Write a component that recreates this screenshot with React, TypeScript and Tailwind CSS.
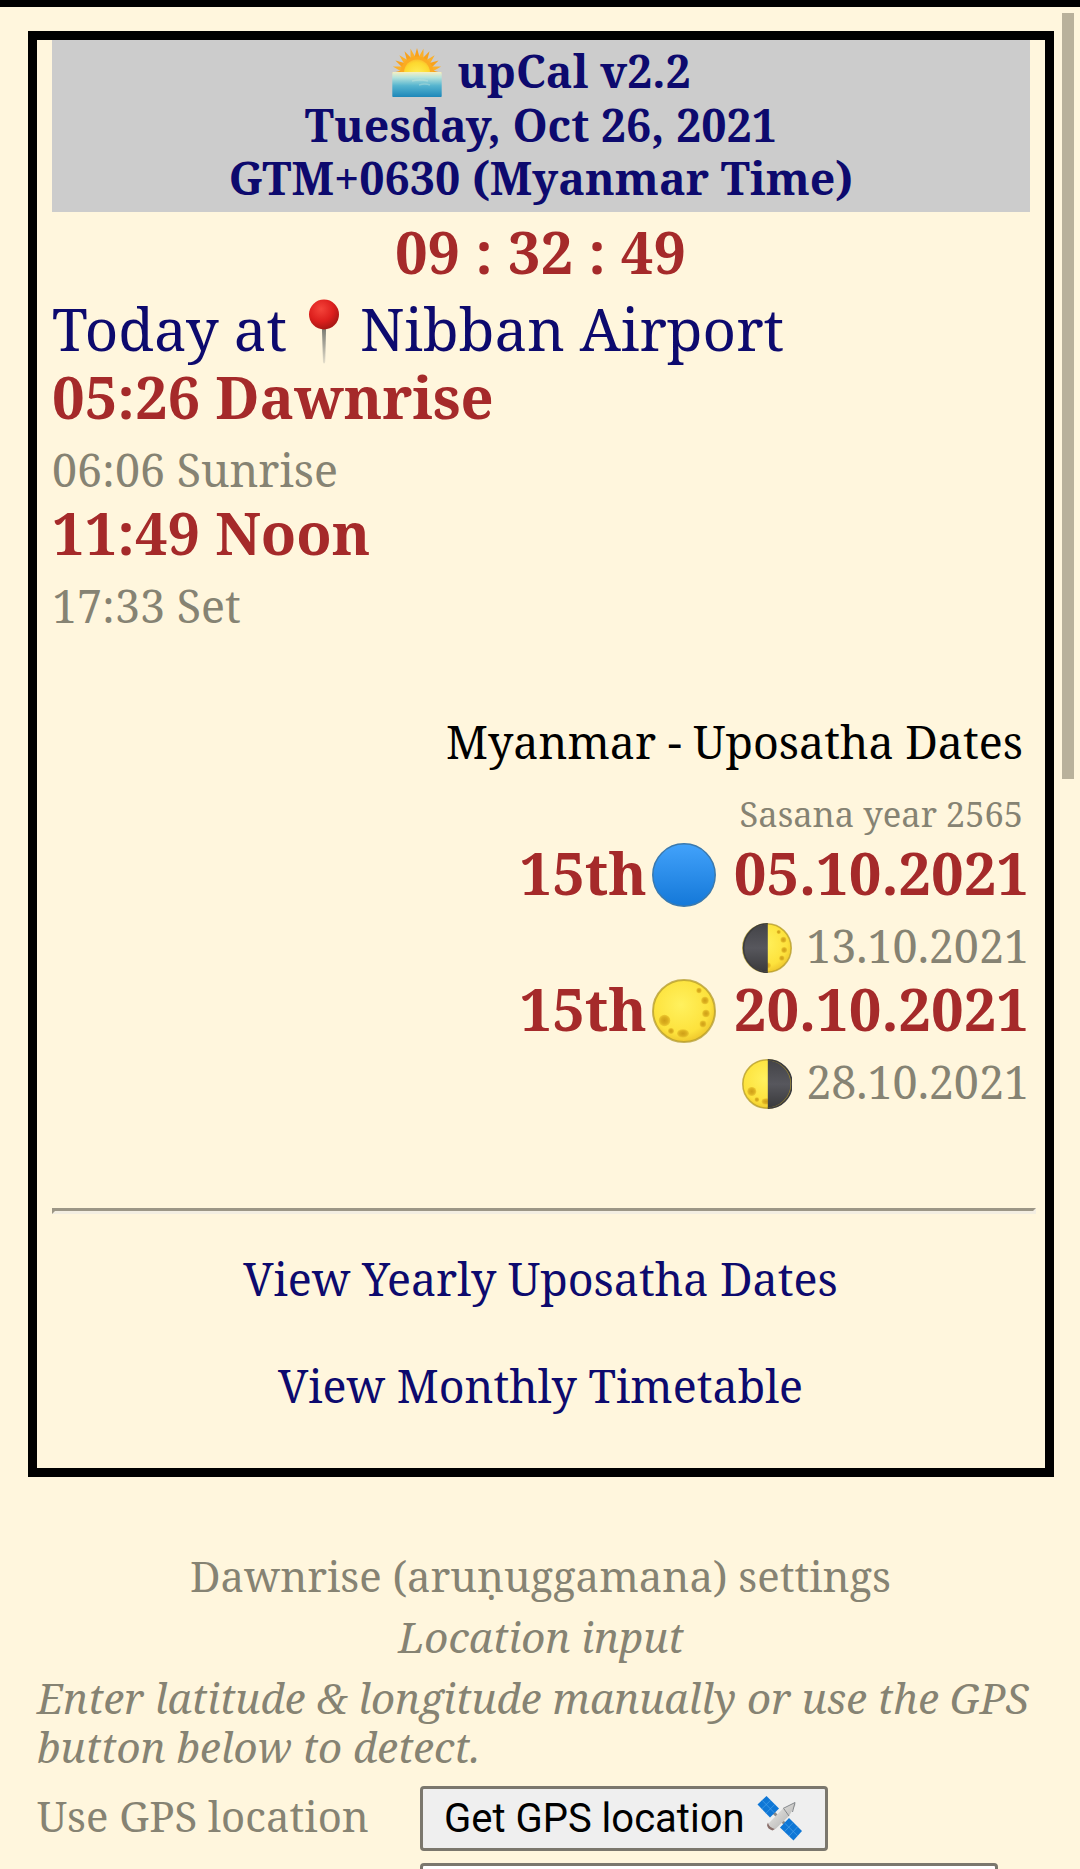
import type { ReactNode } from 'react';

function Sunrise({ className }: { className: string }) {
  const rays = Array.from({ length: 13 }, (_, i) => i * 15 - 90);
  return (
    <svg viewBox="0 0 50 50" className={className}>
      <defs>
        <linearGradient id="sea" x1="0" y1="0" x2="0" y2="1">
          <stop offset="0" stopColor="#f5f0c4" />
          <stop offset="0.22" stopColor="#b5e3dc" />
          <stop offset="0.55" stopColor="#55b4cf" />
          <stop offset="1" stopColor="#1d87b9" />
        </linearGradient>
        <radialGradient id="sun" cx="0.5" cy="0.6" r="0.6">
          <stop offset="0" stopColor="#fff05a" />
          <stop offset="0.8" stopColor="#fdd82f" />
          <stop offset="1" stopColor="#fbc02d" />
        </radialGradient>
      </defs>
      {rays.map((a) => (
        <path key={a} d="M22 12 L25 1 L28 12 Z" fill={a % 30 === 0 ? '#f9a21b' : '#fbb02a'} transform={`rotate(${a} 25 26)`} />
      ))}
      <circle cx="25" cy="26" r="16.5" fill="#fbab22" />
      <circle cx="25" cy="25.5" r="13" fill="url(#sun)" />
      <rect x="0.3" y="25" width="49.4" height="25" rx="0.8" fill="url(#sea)" />
      <path d="M20 34 q8 -2 16 0 M27 38 q6 -2 11 0" stroke="#d8efdf" strokeWidth="1.4" fill="none" opacity="0.35" />
    </svg>
  );
}

function Pin({ className }: { className: string }) {
  return (
    <svg viewBox="0 0 30 66" className={className}>
      <defs>
        <radialGradient id="pinHead" cx="0.4" cy="0.32" r="0.68">
          <stop offset="0" stopColor="#f4443a" />
          <stop offset="0.6" stopColor="#dd1f1d" />
          <stop offset="1" stopColor="#a81714" />
        </radialGradient>
        <linearGradient id="needle" x1="0" y1="0" x2="0" y2="1">
          <stop offset="0" stopColor="#77786f" />
          <stop offset="0.5" stopColor="#a9a79b" />
          <stop offset="1" stopColor="#e5dfcc" />
        </linearGradient>
      </defs>
      <path d="M12.9 28 h4.2 l-0.9 35 q-1.2 3 -2.2 0 Z" fill="url(#needle)" />
      <circle cx="15" cy="15.5" r="15" fill="url(#pinHead)" />
    </svg>
  );
}

function BlueCircle({ className }: { className: string }) {
  return (
    <svg viewBox="0 0 64 64" className={className}>
      <defs>
        <linearGradient id="blue" x1="0" y1="0" x2="0" y2="1">
          <stop offset="0" stopColor="#42a2fb" />
          <stop offset="1" stopColor="#1478d8" />
        </linearGradient>
      </defs>
      <circle cx="32" cy="32" r="31.2" fill="url(#blue)" stroke="#3a79ae" strokeWidth="1.5" />
    </svg>
  );
}

function Moon({ className, dark }: { className: string; dark?: 'left' | 'right' }) {
  const id = dark ?? 'full';
  return (
    <svg viewBox="0 0 64 64" className={className}>
      <defs>
        <radialGradient id={`moon-${id}`} cx="0.45" cy="0.4" r="0.62">
          <stop offset="0" stopColor="#fff15e" />
          <stop offset="0.75" stopColor="#fde23c" />
          <stop offset="1" stopColor="#eec52c" />
        </radialGradient>
        <radialGradient id={`crater-${id}`}>
          <stop offset="0" stopColor="#cf9f18" />
          <stop offset="0.6" stopColor="#dcb020" />
          <stop offset="1" stopColor="#efcb30" />
        </radialGradient>
        <linearGradient id={`shade-${id}`} x1="0" y1="0" x2="0" y2="1">
          <stop offset="0" stopColor="#434347" />
          <stop offset="0.5" stopColor="#57575d" />
          <stop offset="1" stopColor="#39393b" />
        </linearGradient>
      </defs>
      <circle cx="32" cy="32" r="31" fill={`url(#moon-${id})`} />
      <g fill={`url(#crater-${id})`}>
        <circle cx="12.5" cy="41.5" r="5.8" />
        <ellipse cx="31" cy="54.5" rx="6" ry="4.2" />
        <circle cx="19" cy="52" r="3" />
        <circle cx="47" cy="11.5" r="2.7" />
        <circle cx="53" cy="21.5" r="3.8" />
        <circle cx="54" cy="34.5" r="3.8" />
        <circle cx="51" cy="45" r="3.4" />
      </g>
      {dark === 'left' && <path d="M33 1 A31 31 0 0 0 33 63 Z" fill={`url(#shade-${id})`} />}
      {dark === 'right' && <path d="M33 1 A31 31 0 0 1 33 63 Z" fill={`url(#shade-${id})`} />}
      <circle cx="32" cy="32" r="31" fill="none" stroke="#b39a2a" strokeWidth="2" opacity="0.75" />
      {dark === 'left' && <path d="M33 1 A31 31 0 0 0 33 63" fill="none" stroke="#3c3c3f" strokeWidth="2" />}
      {dark === 'right' && <path d="M33 1 A31 31 0 0 1 33 63" fill="none" stroke="#3c3c3f" strokeWidth="2" />}
    </svg>
  );
}

function Satellite({ className }: { className: string }) {
  return (
    <svg viewBox="0 0 45 45" className={className}>
      <defs>
        <linearGradient id="dish" x1="0" y1="0" x2="1" y2="1">
          <stop offset="0" stopColor="#f2f0ec" />
          <stop offset="1" stopColor="#a9a9a9" />
        </linearGradient>
      </defs>
      <path d="M12 12 L33 33" stroke="#8a8a8a" strokeWidth="3" />
      <path d="M9.5 0 L22 12.5 L13 21.5 L0.5 8.5 Z" fill="#0f77d6" />
      <path d="M32 22 L45 35 L36.5 44.5 L23 31.5 Z" fill="#0f77d6" />
      <path d="M5 4.2 L17.5 17 M27.5 27 L40.7 39.8 M13.7 4.2 L4.8 12.8 M17.8 8.4 L9 17.2 M36.3 26.4 L27.4 35.8 M40.7 30.7 L32 40.1" stroke="#55a9ec" strokeWidth="0.6" />
      <path d="M12 27 L26 12.5 L38 6.5 L38.5 9 L32 20 L18.5 33 Q12 33 12 27 Z" fill="url(#dish)" />
      <path d="M26 12.5 L38 6.5 L35.5 16 M27 13 L32 20" stroke="#85888c" strokeWidth="1" fill="none" />
      <path d="M11 26.5 Q12 31.5 18 33 L15.5 34.5 Q10.5 33 10 29 Z" fill="#8a6f6b" />
    </svg>
  );
}

function Strong({ children }: { children: ReactNode }) {
  return <p className="h-[68px] text-[57.8px] leading-[68px] font-bold text-[#a52a2a]">{children}</p>;
}

function Faint({ children }: { children: ReactNode }) {
  return (
    <p className="h-[68px] text-[58.2px] leading-[68px] text-[#868373]">
      <span className="text-[44.8px] leading-none">{children}</span>
    </p>
  );
}

export default function App() {
  return (
    <div className="relative h-[1869px] w-[1080px] overflow-hidden whitespace-nowrap border-t-[7px] border-black bg-[#fff6dd] font-['Noto_Serif','DejaVu_Serif_Condensed',serif] text-[#868373]">
      <div className="absolute top-[6px] right-[6px] h-[766px] w-[12px] bg-[#b9b19b]" />

      <main className="mt-[24px] mr-[26px] ml-[28px] h-[1446px] border-[9px] border-black pl-[15px]">
        <header className="mr-[15px] h-[172px] bg-[#cccccc] pt-[4px] text-center text-[44.7px] leading-[53.6px] font-bold text-[#0d0a6e]">
          <h1 className="h-[53.6px] pl-[1px]">
            <Sunrise className="mr-[15px] inline-block h-[50px] w-[50px] align-[-9px]" />
            upCal v2.2
          </h1>
          <p>Tuesday, Oct 26, 2021</p>
          <p>GTM+0630 (Myanmar Time)</p>
        </header>

        <p className="mr-[16px] h-[83px] text-center text-[57.8px] leading-[80px] font-bold text-[#a52a2a]">09 : 32 : 49</p>

        <section>
          <p className="h-[68px] text-[58.2px] leading-[68px] text-[#0d0a6e]">
            Today at
            <Pin className="mr-[21px] ml-[22px] inline-block h-[66px] w-[30px] align-[-14px]" />
            Nibban Airport
          </p>
          <Strong>05:26 Dawnrise</Strong>
          <Faint>06:06 Sunrise</Faint>
          <Strong>11:49 Noon</Strong>
          <Faint>17:33 Set</Faint>
        </section>

        <section className="mt-[68px] mr-[16px] text-right">
          <p className="mr-[6px] h-[68px] text-[58.2px] leading-[68px] text-black">
            <span className="text-[44.8px] leading-none">Myanmar - Uposatha Dates</span>
          </p>
          <p className="mr-[6px] h-[68px] text-[58.2px] leading-[68px]">
            <span className="text-[34.5px] leading-none">Sasana year 2565</span>
          </p>
          <Strong>
            15th
            <BlueCircle className="mr-[18px] ml-[5px] inline-block h-[64px] w-[64px] align-[-12px]" />
            05.10.2021
          </Strong>
          <Faint>
            <Moon dark="left" className="mr-[14px] inline-block h-[50px] w-[50px] align-[-10px]" />
            13.10.2021
          </Faint>
          <Strong>
            15th
            <Moon className="mr-[18px] ml-[5px] inline-block h-[64px] w-[64px] align-[-12px]" />
            20.10.2021
          </Strong>
          <Faint>
            <Moon dark="right" className="mr-[14px] inline-block h-[50px] w-[50px] align-[-10px]" />
            28.10.2021
          </Faint>
        </section>

        <hr className="mt-[97px] mr-[9px] h-[6px] border-t-[3px] border-r-[3px] border-b-[3px] border-l-[3px] border-t-[#9c9686] border-r-[#f3eee2] border-b-[#f3eee2] border-l-[#9c9686]" />

        <nav className="mt-[11px] mr-[16px] flex flex-col text-center text-[44.8px] leading-[107px] text-[#0d0a6e]">
          <a>View Yearly Uposatha Dates</a>
          <a>View Monthly Timetable</a>
        </nav>
      </main>

      <section className="mt-[68px] ml-[37px] w-[1008px] text-[41.9px]">
        <h2 className="mr-[1px] h-[61px] text-center leading-[61px]">Dawnrise (aruṇuggamana) settings</h2>
        <p className="h-[61px] text-center leading-[61px] italic">Location input</p>
        <p className="mt-[6px] leading-[49px] italic">
          Enter latitude &amp; longitude manually or use the GPS
          <br />
          button below to detect.
        </p>
        <div className="mt-[15px] flex h-[65px]">
          <label className="w-[383px] leading-[60px]">Use GPS location</label>
          <button className="flex h-[65px] w-[408px] items-center rounded-[4px] border-[3px] border-[#7b776d] bg-[#efefef] pl-[21px] font-['Roboto',sans-serif] text-[40px] leading-[59px] text-black">
            Get GPS location
            <Satellite className="ml-[12px] h-[45px] w-[45px]" />
          </button>
        </div>
        <div className="mt-[12px] ml-[383px] h-[65px] w-[578px] rounded-[4px] border-[3px] border-[#7b776d] bg-white" />
      </section>
    </div>
  );
}
